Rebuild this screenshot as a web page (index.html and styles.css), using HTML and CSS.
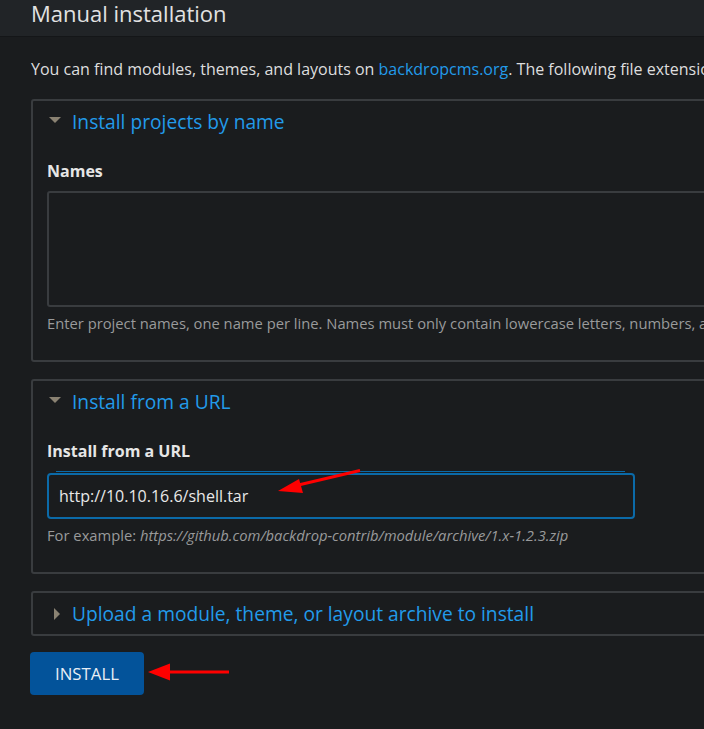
FILE: index.html
```html
<!DOCTYPE html>
<html lang="en">
<head>
<meta charset="utf-8">
<title>Manual installation</title>
<link rel="stylesheet" href="styles.css">
</head>
<body>
<div class="page">
  <header class="header">
    <h1 class="title">Manual installation</h1>
  </header>
  <main class="content">
    <p class="intro">You can find modules, themes, and layouts on <a class="link" href="#">backdropcms.org</a>. The following file extensions are supported: zip tar tgz gz bz2.</p>

    <section class="fieldset">
      <div class="legend"><span class="tri-down"></span><span class="legend-text">Install projects by name</span></div>
      <div class="fs-body">
        <label class="label">Names</label>
        <div class="textarea"></div>
        <div class="desc">Enter project names, one name per line. Names must only contain lowercase letters, numbers, and underscores.</div>
      </div>
    </section>

    <section class="fieldset">
      <div class="legend"><span class="tri-down"></span><span class="legend-text">Install from a URL</span></div>
      <div class="fs-body">
        <label class="label">Install from a URL</label>
        <div class="input-wrap"><div class="input">http://10.10.16.6/shell.tar</div></div>
        <div class="desc">For example: <em>https://github.com/backdrop-contrib/module/archive/1.x-1.2.3.zip</em></div>
      </div>
    </section>

    <section class="fieldset collapsed">
      <div class="legend"><span class="tri-right"></span><span class="legend-text">Upload a module, theme, or layout archive to install</span></div>
    </section>

    <button class="btn" type="button">INSTALL</button>
  </main>
</div>
<svg class="arrows" width="704" height="729" viewBox="0 0 704 729">
  <line x1="360" y1="470.5" x2="292" y2="486.5" stroke="#ff0000" stroke-width="3"/>
  <polygon points="278,491 299,479 303,493" fill="#ff0000"/>
  <line x1="229" y1="672" x2="165" y2="672" stroke="#ff0000" stroke-width="3"/>
  <polygon points="148,672 170,663.5 170,680.5" fill="#ff0000"/>
</svg>
</body>
</html>
```

FILE: styles.css
```css
html, body {
  margin: 0;
  padding: 0;
}
body {
  width: 704px;
  height: 729px;
  overflow: hidden;
  background: #1a1c1e;
  font-family: "Open Sans", "DejaVu Sans", sans-serif;
  color: #dedede;
  position: relative;
}
.page {
  width: 1100px;
}
.header {
  height: 36px;
  background: #212427;
  border-bottom: 1px solid #141618;
  padding-left: 31px;
  overflow: hidden;
}
.title {
  margin: 0;
  font-size: 22px;
  font-weight: 400;
  line-height: 26px;
  color: #e2e2e2;
}
.content {
  padding-left: 31px;
}
.intro {
  margin: 20px 0 18px;
  font-size: 16px;
  line-height: 24px;
  white-space: nowrap;
}
.link {
  color: #229bea;
  text-decoration: none;
}
.fieldset {
  width: 1000px;
  border: 2px solid #393c3f;
  border-radius: 3px;
  margin-bottom: 17px;
  padding-bottom: 26px;
}
.fieldset.collapsed {
  padding-bottom: 0;
  margin-bottom: 16px;
}
.legend {
  display: flex;
  align-items: center;
  height: 40px;
  padding-left: 16px;
  gap: 11px;
}
.collapsed .legend {
  height: 41px;
  padding-left: 21px;
  gap: 12px;
}
.legend-text {
  font-size: 19.2px;
  color: #229bea;
  white-space: nowrap;
}
.tri-down {
  width: 0;
  height: 0;
  border-left: 6px solid transparent;
  border-right: 6px solid transparent;
  border-top: 6px solid #8a8272;
  margin-top: -3px;
}
.tri-right {
  width: 0;
  height: 0;
  border-top: 6px solid transparent;
  border-bottom: 6px solid transparent;
  border-left: 6px solid #8a8272;
}
.fs-body {
  padding: 18px 0 0 14px;
}
.label {
  display: block;
  font-size: 16px;
  font-weight: 700;
  line-height: 24px;
  color: #e6e6e6;
  margin-bottom: 8px;
}
.textarea {
  width: 900px;
  height: 112px;
  border: 2px solid #393c3f;
  border-radius: 3px;
}
.desc {
  margin-top: 5px;
  font-size: 14.75px;
  line-height: 22px;
  color: #999a9b;
  white-space: nowrap;
}
.desc em {
  font-style: italic;
}
.input-wrap {
  position: relative;
  width: 588px;
  margin-top: 10px;
}
.input-wrap::before {
  content: "";
  position: absolute;
  left: 9px;
  right: 10px;
  top: -2px;
  height: 1px;
  background: #0b6aa8;
}
.input {
  height: 42px;
  border: 2px solid #0b6aa8;
  border-radius: 4px;
  padding-left: 10px;
  font-size: 16px;
  line-height: 42px;
  color: #e8e8e8;
}
.btn {
  display: block;
  margin-left: -1px;
  width: 114px;
  height: 43px;
  background: #03539a;
  color: #e8eef5;
  border: 0;
  border-radius: 4px;
  font-family: "Open Sans", "DejaVu Sans", sans-serif;
  font-size: 16.8px;
  padding: 0;
}
.arrows {
  position: absolute;
  left: 0;
  top: 0;
  pointer-events: none;
}
```
